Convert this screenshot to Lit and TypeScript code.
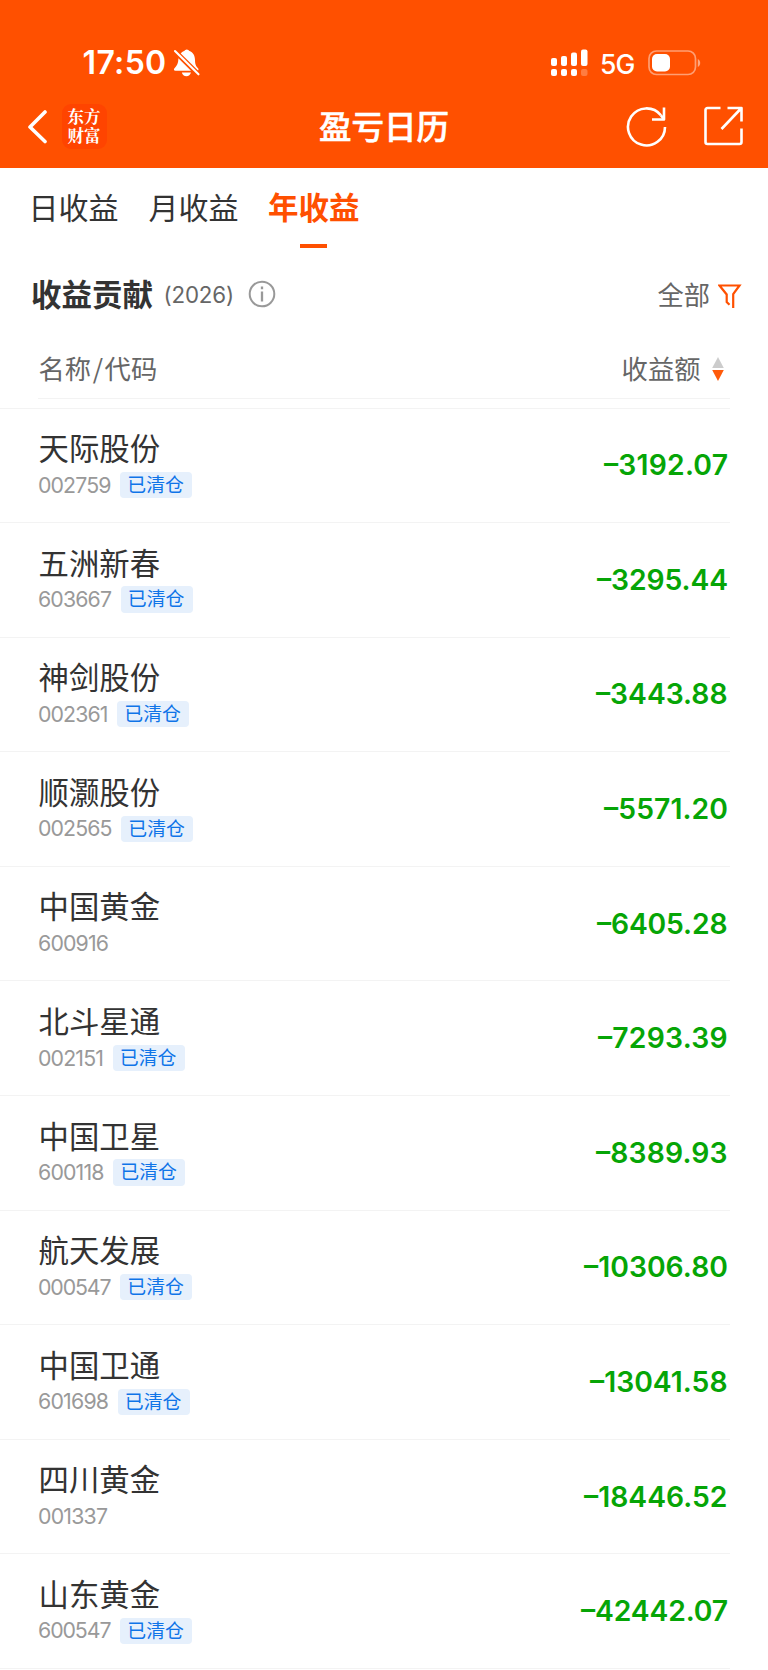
import { LitElement, html, css, svg } from "lit";
import { customElement, property } from "lit/decorators.js";

interface Holding {
  name: string;
  code: string;
  amount: string;
  closed: boolean;
  codeWidth: number;
  amountWidth: number;
}

const holdings: Holding[] = [
  { name: "天际股份", code: "002759", amount: "–3192.07", closed: true, codeWidth: 73.5, amountWidth: 124 },
  { name: "五洲新春", code: "603667", amount: "–3295.44", closed: true, codeWidth: 74, amountWidth: 131 },
  { name: "神剑股份", code: "002361", amount: "–3443.88", closed: true, codeWidth: 70.5, amountWidth: 131.5 },
  { name: "顺灏股份", code: "002565", amount: "–5571.20", closed: true, codeWidth: 74.5, amountWidth: 124 },
  { name: "中国黄金", code: "600916", amount: "–6405.28", closed: false, codeWidth: 71, amountWidth: 130.5 },
  { name: "北斗星通", code: "002151", amount: "–7293.39", closed: true, codeWidth: 66, amountWidth: 129.5 },
  { name: "中国卫星", code: "600118", amount: "–8389.93", closed: true, codeWidth: 66.5, amountWidth: 131.5 },
  { name: "航天发展", code: "000547", amount: "–10306.80", closed: true, codeWidth: 73.5, amountWidth: 144 },
  { name: "中国卫通", code: "601698", amount: "–13041.58", closed: true, codeWidth: 71, amountWidth: 137.5 },
  { name: "四川黄金", code: "001337", amount: "–18446.52", closed: false, codeWidth: 70, amountWidth: 143.5 },
  { name: "山东黄金", code: "600547", amount: "–42442.07", closed: true, codeWidth: 73.5, amountWidth: 147 },
];

@customElement("status-bar")
class StatusBar extends LitElement {
  static styles = css`
    :host { display: flex; align-items: center; height: 44px; padding: 41px 67px 0 82.5px; color: #fff; font-family: Inter, sans-serif; }
    .time { font-size: 32px; font-weight: 600; line-height: 44px; letter-spacing: 0.35px; }
    .bell { margin-left: 6.5px; }
    .space { flex: 1; }
    .net { font-size: 26.5px; font-weight: 500; line-height: 44px; margin: 1px 13.5px 0 12.5px; letter-spacing: -0.9px; }
    svg { display: block; }
  `;
  render() {
    return html`
      <span class="time">17:50</span>
      <svg class="bell" width="27" height="30" viewBox="0 0 27 30">
        <path fill="#fff" d="M6.8 6.8C8 4.6 9.6 3.4 11.2 2.9A3 3 0 0 1 16.4 2.9C20 4.2 22 7.5 22 12c0 4.6 1.1 6.3 3 8.2.8.8.7 2.3-.6 2.5Z M5.4 10.2 18 22.7H2.5C.8 22.7.5 21.3 1.5 20.2 4 17.5 5.3 15.5 5.4 10.2Z M8.8 24.5h9.2c-.7 2.3-2.3 3.7-4.6 3.7s-4-1.4-4.6-3.7Z"/>
        <path stroke="#ff5000" stroke-width="1.5" d="M4 2.8 26.5 25"/>
        <path stroke="#fff" stroke-width="2.1" stroke-linecap="round" d="M2 3 25.5 26.3"/>
      </svg>
      <span class="space"></span>
      <svg width="38" height="28" viewBox="0 0 38 28" fill="#fff">
        <rect x="1" y="9" width="6" height="8" rx="2"/><rect x="11" y="7" width="6" height="10" rx="2"/>
        <rect x="21" y="3.5" width="6" height="13.5" rx="2"/><rect x="31" y="0.5" width="6.5" height="16.5" rx="2"/>
        <rect x="1" y="20" width="6" height="7" rx="2"/><rect x="11" y="20" width="6" height="7" rx="2"/>
        <rect x="21" y="20" width="6" height="7" rx="2"/><rect x="31" y="20" width="6.5" height="7" rx="2" opacity=".25"/>
      </svg>
      <span class="net">5G</span>
      <svg width="53" height="26" viewBox="0 0 53 26">
        <rect x="1" y="1" width="46.5" height="23.5" rx="7.5" fill="none" stroke="#fff" stroke-opacity=".45" stroke-width="1.7"/>
        <rect x="4" y="4" width="18" height="17.5" rx="5" fill="#fff"/>
        <path d="M49.8 9c3.2 1.5 3.2 6.5 0 8Z" fill="#fff" opacity=".5"/>
      </svg>
    `;
  }
}

@customElement("nav-bar")
class NavBar extends LitElement {
  static styles = css`
    :host { display: grid; grid-template-columns: 1fr auto 1fr; align-items: center; height: 83px; color: #fff; font-family: "Noto Sans CJK SC", sans-serif; }
    .left { display: flex; align-items: center; padding-left: 26px; }
    .logo { box-sizing: border-box; width: 45px; height: 45px; margin: 0 0 0 14.5px; padding-top: 3px; border-radius: 9px; background: #ff4400; text-align: center; font: 700 16.5px/19px "Noto Serif CJK SC", "Noto Sans CJK SC", sans-serif; }
    .title { font-size: 32.5px; font-weight: 500; line-height: 46px; margin-top: -3px; -webkit-text-stroke: 0.6px #fff; }
    .right { display: flex; align-items: center; justify-content: flex-end; gap: 37.5px; padding: 0 25px 1px 0; }
    svg { display: block; }
  `;
  render() {
    return html`
      <div class="left">
        <svg width="21" height="34" viewBox="0 0 21 34"><path d="M19 2 4 17 19 31.5" fill="none" stroke="#fff" stroke-width="3.6" stroke-linecap="round" stroke-linejoin="round"/></svg>
        <div class="logo">东方<br>财富</div>
      </div>
      <div class="title">盈亏日历</div>
      <div class="right">
        <svg width="41" height="41" viewBox="0 0 41 41" fill="none" stroke="#fff" stroke-width="2.6" stroke-linejoin="round">
          <path d="M34.9 9.3A18.5 18.5 0 1 0 39 20.9M38 1.5v12H26"/>
          <path d="M34.9 9.3 38 13.5"/>
        </svg>
        <svg width="39" height="41" viewBox="0 0 39 41" fill="none" stroke="#fff" stroke-width="2.6" stroke-linejoin="round">
          <path d="M16.5 2H3.5a2 2 0 0 0-2 2V36a2 2 0 0 0 2 2H35.5a2 2 0 0 0 2-2V22.5"/>
          <path d="M23.5 2H37.5V15.5M37 2.5 17.5 23"/>
        </svg>
      </div>
    `;
  }
}

@customElement("holding-row")
class HoldingRow extends LitElement {
  @property({ attribute: false }) item!: Holding;
  static styles = css`
    :host { display: flex; align-items: center; justify-content: space-between; box-sizing: border-box; height: 114.6px; width: 730px; padding: 0 2.2px 0 38px; border-bottom: 1.5px solid #f3f3f3; }
    .info { display: flex; flex-direction: column; margin-top: -7px; }
    .name { font: 400 30.4px/44px "Noto Sans CJK SC", sans-serif; color: #333; padding: 0 0 2.5px 0.5px; }
    .meta { display: flex; align-items: center; gap: 8.5px; height: 27px; }
    .code { font: 400 21.3px/27px Inter, sans-serif; fill: #999; overflow: visible; }
    .tag { height: 26.5px; padding: 0 8.3px 0 7.3px; border-radius: 4px; background: #e6f0fc; color: #0f74e8; font: 400 18.9px/24px "Noto Sans CJK SC", sans-serif; }
    .amount { font: 600 28.3px/40px Inter, sans-serif; fill: #06a506; overflow: visible; }
  `;
  render() {
    const i = this.item;
    return html`
      <div class="info">
        <div class="name">${i.name}</div>
        <div class="meta">
          <svg class="code" width=${i.codeWidth} height="27">
            ${svg`<text x="0" y="21" textLength=${i.codeWidth}>${i.code}</text>`}
          </svg>
          ${i.closed ? html`<span class="tag">已清仓</span>` : ""}
        </div>
      </div>
      <svg class="amount" width=${i.amountWidth} height="40">
        ${svg`<text x="0" y="29.7" textLength=${i.amountWidth}>${i.amount}</text>`}
      </svg>
    `;
  }
}

@customElement("app-root")
class AppRoot extends LitElement {
  static styles = css`
    :host { display: block; width: 768px; height: 1670px; overflow: hidden; background: #fff; color: #333; font-family: "Noto Sans CJK SC", sans-serif; }
    .head { background: #ff5000; height: 168px; }
    .tabs { display: flex; height: 80px; padding-left: 28.5px; box-sizing: border-box; gap: 30px; font-size: 30px; }
    .tab { display: flex; flex-direction: column; align-items: center; justify-content: space-between; line-height: 44px; padding-top: 16px; }
    .active { color: #ff5000; font-weight: 700; font-size: 30.5px; margin-left: -0.5px; }
    .active::after { content: ""; width: 27px; height: 4px; background: #ff5000; }
    .summary { display: flex; align-items: center; height: 91px; padding: 0 26px 0 31px; }
    .heading { font-size: 30.5px; font-weight: 700; line-height: 44px; margin-top: -2px; }
    .year { font: 400 22.3px/30px Inter, sans-serif; color: #666; margin: 2px 14.5px 0 10.5px; letter-spacing: -0.15px; }
    .all { margin-left: auto; margin-right: 8px; font-size: 26.3px; line-height: 40px; color: #666; }
    .funnel { margin-top: 4px; }
    .columns { display: flex; justify-content: space-between; align-items: center; box-sizing: border-box; height: 59.5px; width: 692px; margin-left: 38px; padding: 0 6.5px 0 0.5px; border-bottom: 1px solid #f3f3f3; font-size: 26.3px; line-height: 40px; color: #666; }
    .slash { margin: 0 1.6px; }
    .sort { display: flex; align-items: center; gap: 11px; }
    .arrows { margin-top: 1px; }
    .list { width: 730px; margin-top: 9px; border-top: 1.5px solid #f3f3f3; }
    svg { display: block; }
  `;
  render() {
    return html`
      <div class="head"><status-bar></status-bar><nav-bar></nav-bar></div>
      <div class="tabs">
        <div class="tab">日收益</div>
        <div class="tab">月收益</div>
        <div class="tab active">年收益</div>
      </div>
      <div class="summary">
        <span class="heading">收益贡献</span>
        <span class="year">(2026)</span>
        <svg width="28" height="28" viewBox="0 0 28 28" fill="none" stroke="#999" stroke-width="2">
          <circle cx="14" cy="14" r="12.3"/><path d="M14 11.5v10M14 6.5v2.8" stroke-width="2.3"/>
        </svg>
        <span class="all">全部</span>
        <svg class="funnel" width="24" height="26" viewBox="0 0 24 26" fill="none" stroke="#ff5000" stroke-width="2.2">
          <path d="M11.5 21.8 8.7 19V11.5L1.5 2.5H21.5L15.2 11V25"/>
        </svg>
      </div>
      <div class="columns">
        <span>名称<span class="slash">/</span>代码</span>
        <span class="sort">收益额
          <svg class="arrows" width="12" height="26" viewBox="0 0 12 26"><path d="M6 1 11.8 12H.2Z" fill="#ccc"/><path d="M.2 14H11.8L6 25Z" fill="#ff5a0a"/></svg>
        </span>
      </div>
      <div class="list">${holdings.map((h) => html`<holding-row .item=${h}></holding-row>`)}</div>
    `;
  }
}
